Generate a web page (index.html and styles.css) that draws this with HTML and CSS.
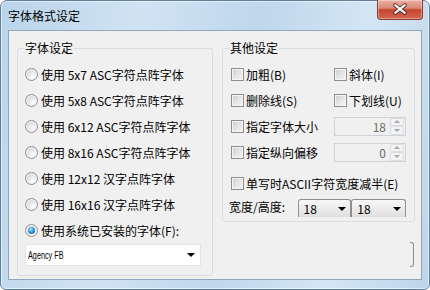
FILE: index.html
```html
<!DOCTYPE html>
<html lang="zh-CN">
<head>
    <meta charset="UTF-8">
    <meta name="viewport" content="width=device-width, initial-scale=1.0">
    <title>字体格式设定</title>
    <link rel="stylesheet" href="styles.css">
</head>
<body>
    <div class="window">
        <div class="titlebar">
            <span class="title">字体格式设定</span>
            <button class="close" type="button" aria-label="关闭">
                <svg width="46" height="19" viewBox="0 0 46 19">
                    <path d="M18 5 L28 13 M28 5 L18 13" stroke="#5b2a22" stroke-width="4.2" stroke-linecap="round" fill="none"/>
                    <path d="M18 5 L28 13 M28 5 L18 13" stroke="#ffffff" stroke-width="2.2" stroke-linecap="round" fill="none"/>
                </svg>
            </button>
        </div>

        <div class="client">
            <!-- 字体设定 -->
            <fieldset class="group group-font">
                <legend>字体设定</legend>
                <label class="radio-row"><span class="radio"></span>使用 5x7 ASC字符点阵字体</label>
                <label class="radio-row"><span class="radio"></span>使用 5x8 ASC字符点阵字体</label>
                <label class="radio-row"><span class="radio"></span>使用 6x12 ASC字符点阵字体</label>
                <label class="radio-row"><span class="radio"></span>使用 8x16 ASC字符点阵字体</label>
                <label class="radio-row"><span class="radio"></span>使用 12x12 汉字点阵字体</label>
                <label class="radio-row"><span class="radio"></span>使用 16x16 汉字点阵字体</label>
                <label class="radio-row"><span class="radio checked"></span>使用系统已安装的字体(F):</label>
                <div class="combo combo-font">
                    <span class="agency">Agency FB</span>
                    <span class="arrow"></span>
                </div>
            </fieldset>

            <!-- 其他设定 -->
            <div class="right-col">
                <fieldset class="group group-other">
                    <legend>其他设定</legend>
                    <div class="opt-grid">
                        <label class="check-row"><span class="check"></span>加粗(B)</label>
                        <label class="check-row"><span class="check"></span>斜体(I)</label>
                        <label class="check-row"><span class="check"></span>删除线(S)</label>
                        <label class="check-row"><span class="check"></span>下划线(U)</label>
                        <label class="check-row"><span class="check"></span>指定字体大小</label>
                        <div class="spin">
                            <span class="spin-val">18</span>
                            <span class="spin-btns"><i class="up"></i><i class="down"></i></span>
                        </div>
                        <label class="check-row"><span class="check"></span>指定纵向偏移</label>
                        <div class="spin">
                            <span class="spin-val">0</span>
                            <span class="spin-btns"><i class="up"></i><i class="down"></i></span>
                        </div>
                        <label class="check-row full half-row"><span class="check"></span>单写时ASCII字符宽度减半(E)</label>
                        <div class="size-row full">
                            <span class="size-label">宽度/高度:</span>
                            <div class="combo combo-small"><span>18</span><span class="arrow"></span></div>
                            <div class="combo combo-small second"><span>18</span><span class="arrow"></span></div>
                        </div>
                    </div>
                </fieldset>
                <div class="btn-edge"></div>
            </div>
        </div>
    </div>
</body>
</html>
```

FILE: styles.css
```css
* {
    box-sizing: border-box;
}
body {
    margin: 0;
    width: 430px;
    height: 290px;
    overflow: hidden;
    background: #ffffff;
    font-family: "Noto Sans CJK SC", "Noto Sans", sans-serif;
    font-size: 12px;
    color: #000;
}
.window {
    width: 430px;
    height: 290px;
    border: 1px solid #5f7f9f;
    border-radius: 7px 7px 6px 6px;
    padding: 0 7px;
    display: flex;
    flex-direction: column;
    background: linear-gradient(100deg, #bad4ea 0%, #d0e3f3 30%, #bed7ec 55%, #d4e6f4 78%, #bcd5eb 100%);
    box-shadow: inset 0 0 0 1px rgba(255, 255, 255, 0.55);
}
.titlebar {
    height: 29px;
    display: flex;
    justify-content: space-between;
    align-items: flex-start;
}
.title {
    line-height: 29px;
    margin-left: 0;
}
.close {
    width: 46px;
    height: 20px;
    margin-top: -1px;
    margin-right: -1px;
    padding: 0;
    border: 1px solid #8a3b2f;
    border-top: none;
    border-radius: 0 0 4px 4px;
    background: linear-gradient(180deg, #eab0a1 0%, #dc8a78 42%, #c8452e 52%, #d2654e 100%);
    box-shadow: inset 0 0 0 1px rgba(255, 255, 255, 0.35);
    display: flex;
}
.client {
    height: 250px;
    border: 1px solid #90a6bc;
    background: #f0f0f0;
    display: grid;
    grid-template-columns: 196px 193px;
    column-gap: 9px;
    align-items: start;
    padding: 9px 0 0 8px;
}
.group {
    margin: 0;
    min-width: 0;
    border: 1px solid #d5dfe5;
    border-radius: 3px;
    padding: 5px 6px 9px 7px;
}
.group legend {
    padding: 0 1px 0 0;
    line-height: 16px;
}
.radio-row {
    height: 26px;
    display: flex;
    align-items: center;
    gap: 3px;
    white-space: nowrap;
}
.radio {
    width: 13px;
    height: 13px;
    flex: none;
    border: 1px solid #8e8f8f;
    border-radius: 50%;
    background: radial-gradient(circle at 65% 70%, #ffffff 0%, #e6e6e6 45%, #c9c9c9 100%);
    box-shadow: inset 0 0 0 1px #f6f6f6;
    display: flex;
    align-items: center;
    justify-content: center;
}
.radio.checked::after {
    content: "";
    width: 7px;
    height: 7px;
    border-radius: 50%;
    background: radial-gradient(circle at 40% 35%, #b9ecff 0%, #3b9de0 40%, #104f93 100%);
}
.combo {
    display: flex;
    align-items: center;
    justify-content: space-between;
    background: #ffffff;
}
.combo-font {
    width: 176px;
    height: 22px;
    margin-top: 1px;
    border: 1px solid #e2e3ea;
    padding: 0 5px 0 2px;
}
.agency {
    display: inline-block;
    font-family: "Liberation Sans", sans-serif;
    font-size: 11px;
    transform: scaleX(0.66);
    transform-origin: left center;
}
.arrow {
    width: 0;
    height: 0;
    border-left: 4px solid transparent;
    border-right: 4px solid transparent;
    border-top: 4px solid #000;
}
.right-col {
    display: flex;
    flex-direction: column;
}
.group-other {
    padding: 5px 6px 4px 8px;
}
.group-other legend {
    margin-left: -1px;
}
.opt-grid {
    display: grid;
    grid-template-columns: 103px 72px;
    grid-auto-rows: 26px;
    align-items: center;
}
.check-row {
    display: flex;
    align-items: center;
    gap: 2px;
    white-space: nowrap;
}
.full {
    grid-column: 1 / 3;
}
.half-row {
    margin-top: 10px;
}
.check {
    width: 13px;
    height: 13px;
    flex: none;
    border: 1px solid #8e8f8f;
    background: linear-gradient(135deg, #cbcbcb 0%, #e4e4e4 50%, #f6f6f6 100%);
    box-shadow: inset 0 0 0 1px #f4f4f4;
}
.spin {
    height: 19px;
    border: 1px solid #cdd2d8;
    background: #f0f0f0;
    display: flex;
    align-items: stretch;
    color: #6d6d6d;
}
.spin-val {
    flex: 1;
    text-align: right;
    padding-right: 4px;
    line-height: 17px;
}
.spin-btns {
    width: 15px;
    display: flex;
    flex-direction: column;
    padding: 0 1px 0 0;
}
.spin-btns i {
    flex: 1;
    border: 1px solid #dadcde;
    border-radius: 2px;
    background: #f3f3f3;
    display: flex;
    align-items: center;
    justify-content: center;
}
.spin-btns .up::after,
.spin-btns .down::after {
    content: "";
    border-left: 3px solid transparent;
    border-right: 3px solid transparent;
}
.spin-btns .up::after {
    border-bottom: 3px solid #a8a8a8;
}
.spin-btns .down::after {
    border-top: 3px solid #a8a8a8;
}
.size-row {
    display: flex;
    align-items: center;
    margin-left: -2px;
    margin-top: 4px;
}
.size-label {
    width: 69px;
    white-space: nowrap;
}
.combo-small {
    width: 54px;
    height: 18px;
    margin-top: 4px;
    border: 1px solid #8f8f8f;
    border-bottom: none;
    border-radius: 3px 3px 0 0;
    padding: 0 4px 0 5px;
    background: linear-gradient(180deg, #f8f8f8 0%, #ececec 50%, #dfdfdf 100%);
}
.combo-small.second {
    width: 55px;
}
.btn-edge {
    align-self: flex-end;
    width: 4px;
    height: 25px;
    margin-top: 20px;
    margin-right: 1px;
    border: 1px solid #8a8a8a;
    border-left: none;
    border-radius: 0 3px 3px 0;
}
```
